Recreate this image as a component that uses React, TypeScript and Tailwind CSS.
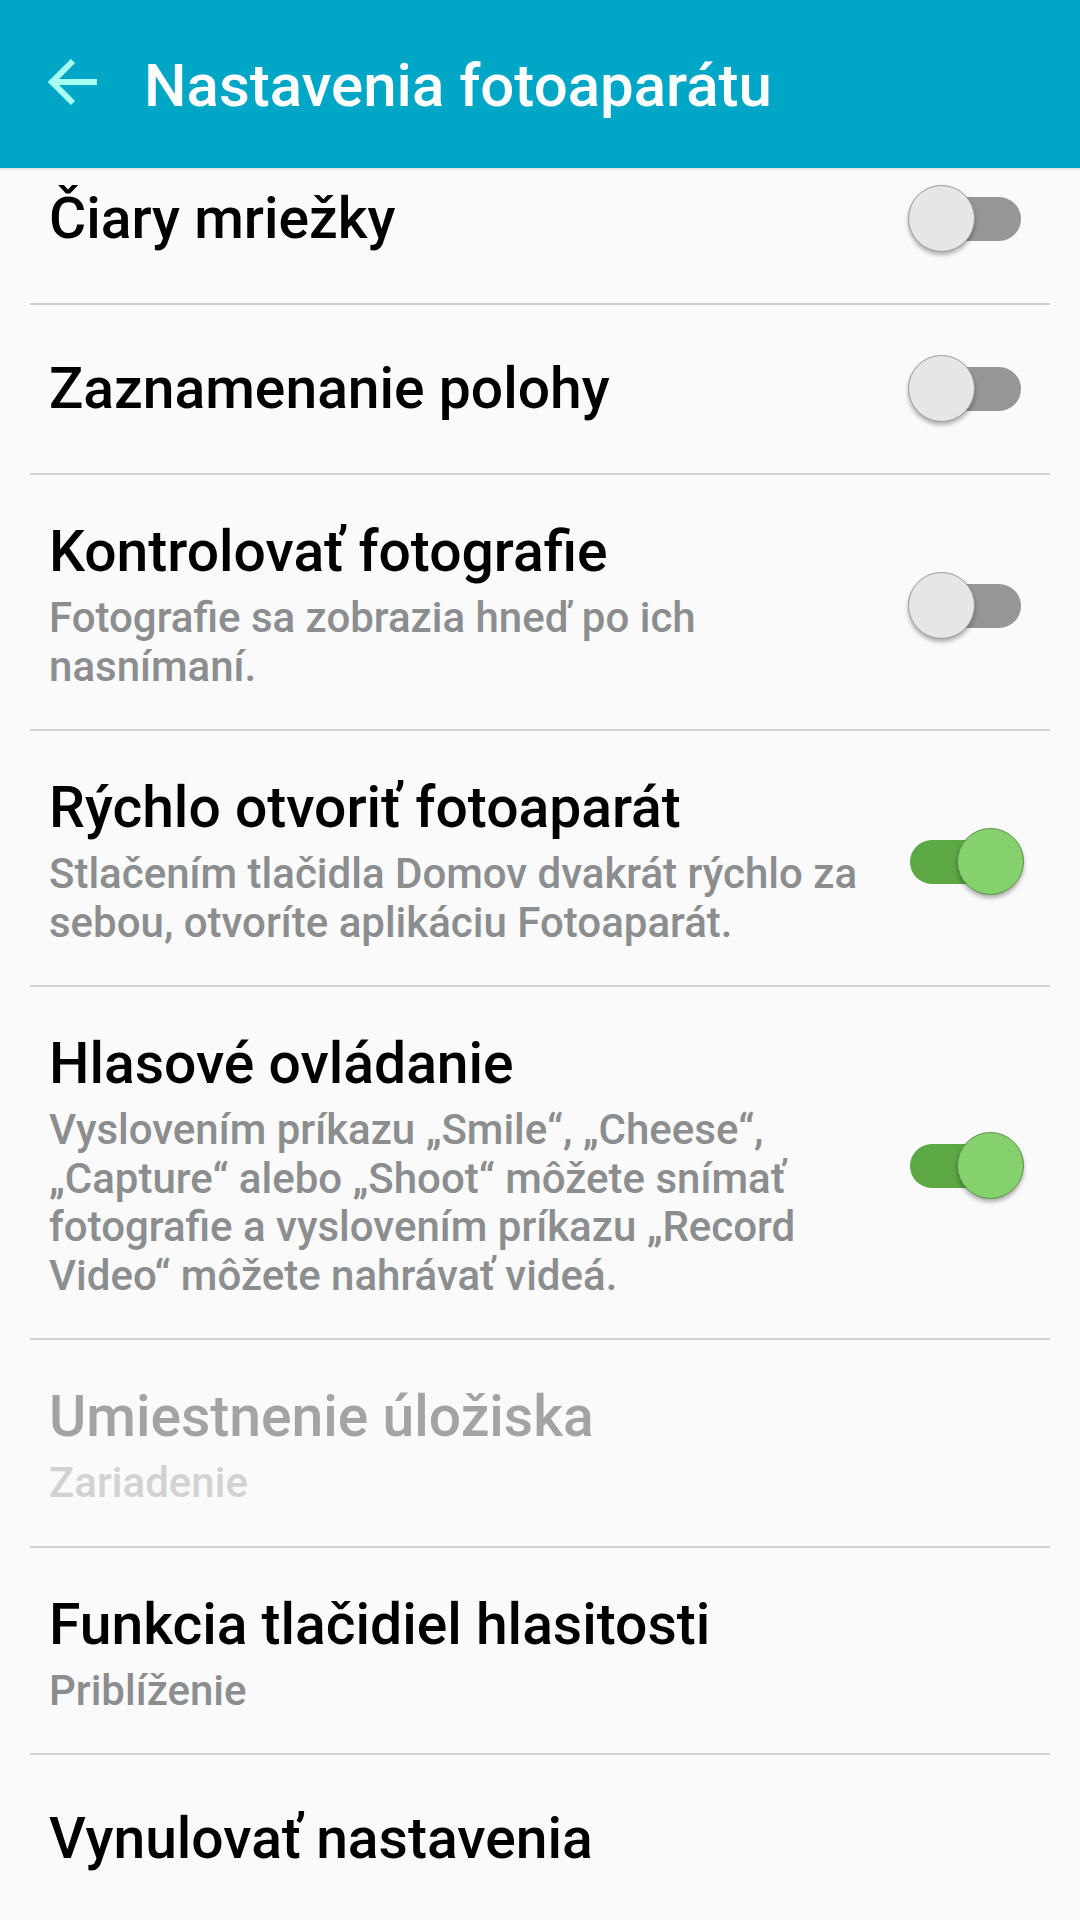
import React from "react";

type Row = {
  title: string;
  sub?: string;
  toggle?: "on" | "off";
  disabled?: boolean;
};

const rows: Row[] = [
  { title: "Čiary mriežky", toggle: "off" },
  { title: "Zaznamenanie polohy", toggle: "off" },
  {
    title: "Kontrolovať fotografie",
    sub: "Fotografie sa zobrazia hneď po ich nasnímaní.",
    toggle: "off",
  },
  {
    title: "Rýchlo otvoriť fotoaparát",
    sub: "Stlačením tlačidla Domov dvakrát rýchlo za sebou, otvoríte aplikáciu Fotoaparát.",
    toggle: "on",
  },
  {
    title: "Hlasové ovládanie",
    sub: "Vyslovením príkazu „Smile“, „Cheese“, „Capture“ alebo „Shoot“ môžete snímať fotografie a vyslovením príkazu „Record Video“ môžete nahrávať videá.",
    toggle: "on",
  },
  { title: "Umiestnenie úložiska", sub: "Zariadenie", disabled: true },
  { title: "Funkcia tlačidiel hlasitosti", sub: "Priblíženie" },
  { title: "Vynulovať nastavenia" },
];

function Toggle({ on }: { on: boolean }) {
  return (
    <div className="relative w-[116px] h-[68px] shrink-0 flex items-center">
      <div
        className={
          on
            ? "ml-[2px] w-[111px] h-[44px] rounded-full bg-[#5ca845]"
            : "ml-[2px] w-[111px] h-[44px] rounded-full bg-[#969696]"
        }
      />
      <div
        className={
          on
            ? "absolute left-[49px] top-0 w-[67px] h-[67px] rounded-full bg-[#84d16d] border border-[#5c8f4c] shadow-[0_3px_4px_rgba(0,0,0,0.3)]"
            : "absolute left-0 top-0 w-[67px] h-[67px] rounded-full bg-[#e6e6e6] border border-[#9a9a9a] shadow-[0_3px_4px_rgba(0,0,0,0.3)]"
        }
      />
    </div>
  );
}

export default function App() {
  return (
    <div
      className="w-[1080px] h-[1920px] overflow-hidden bg-[#fafafa] flex flex-col"
      style={{ fontFamily: "Roboto, 'Noto Sans', sans-serif" }}
    >
      <header className="relative z-10 h-[168px] shrink-0 bg-[#00a6c5] flex items-center shadow-[0_1px_2px_rgba(0,0,0,0.15)]">
        <svg
          className="ml-[48px] mt-[-4px]"
          width="50"
          height="48"
          viewBox="0 0 50 48"
          fill="none"
        >
          <path
            d="M4 24 H49 M25 3 L4 24 L25 45"
            stroke="#a8fff4"
            strokeWidth="6"
          />
        </svg>
        <h1 className="ml-[46px] mt-[4px] text-[60px] leading-none text-white font-medium">
          Nastavenia fotoaparátu
        </h1>
      </header>
      <div className="flex-1 overflow-hidden">
        <div className="-mt-[33px]">
          {rows.map((r, i) => (
            <div key={i}>
              <div
                className={
                  r.sub
                    ? "flex items-center pl-[49px] pr-[56px] pt-[45px] pb-[38px]"
                    : "flex items-center pl-[49px] pr-[56px] h-[168px]"
                }
              >
                <div className="flex-1 min-w-0">
                  <div
                    className={
                      r.disabled
                        ? "text-[57px] leading-[64px] font-medium text-[#a3a3a3]"
                        : "text-[57px] leading-[64px] font-medium text-black"
                    }
                  >
                    {r.title}
                  </div>
                  {r.sub && (
                    <div
                      className={
                        r.disabled
                          ? "mt-[10px] text-[42px] leading-[48.5px] font-medium text-[#d2d2d2] pr-[24px]"
                          : "mt-[10px] text-[42px] leading-[48.5px] font-medium text-[#8b8d8f] pr-[24px]"
                      }
                    >
                      {r.sub}
                    </div>
                  )}
                </div>
                {r.toggle && <Toggle on={r.toggle === "on"} />}
              </div>
              {i < rows.length - 1 && (
                <div className="mx-[30px] h-[2px] bg-[#d0d0d0]" />
              )}
            </div>
          ))}
        </div>
      </div>
    </div>
  );
}
